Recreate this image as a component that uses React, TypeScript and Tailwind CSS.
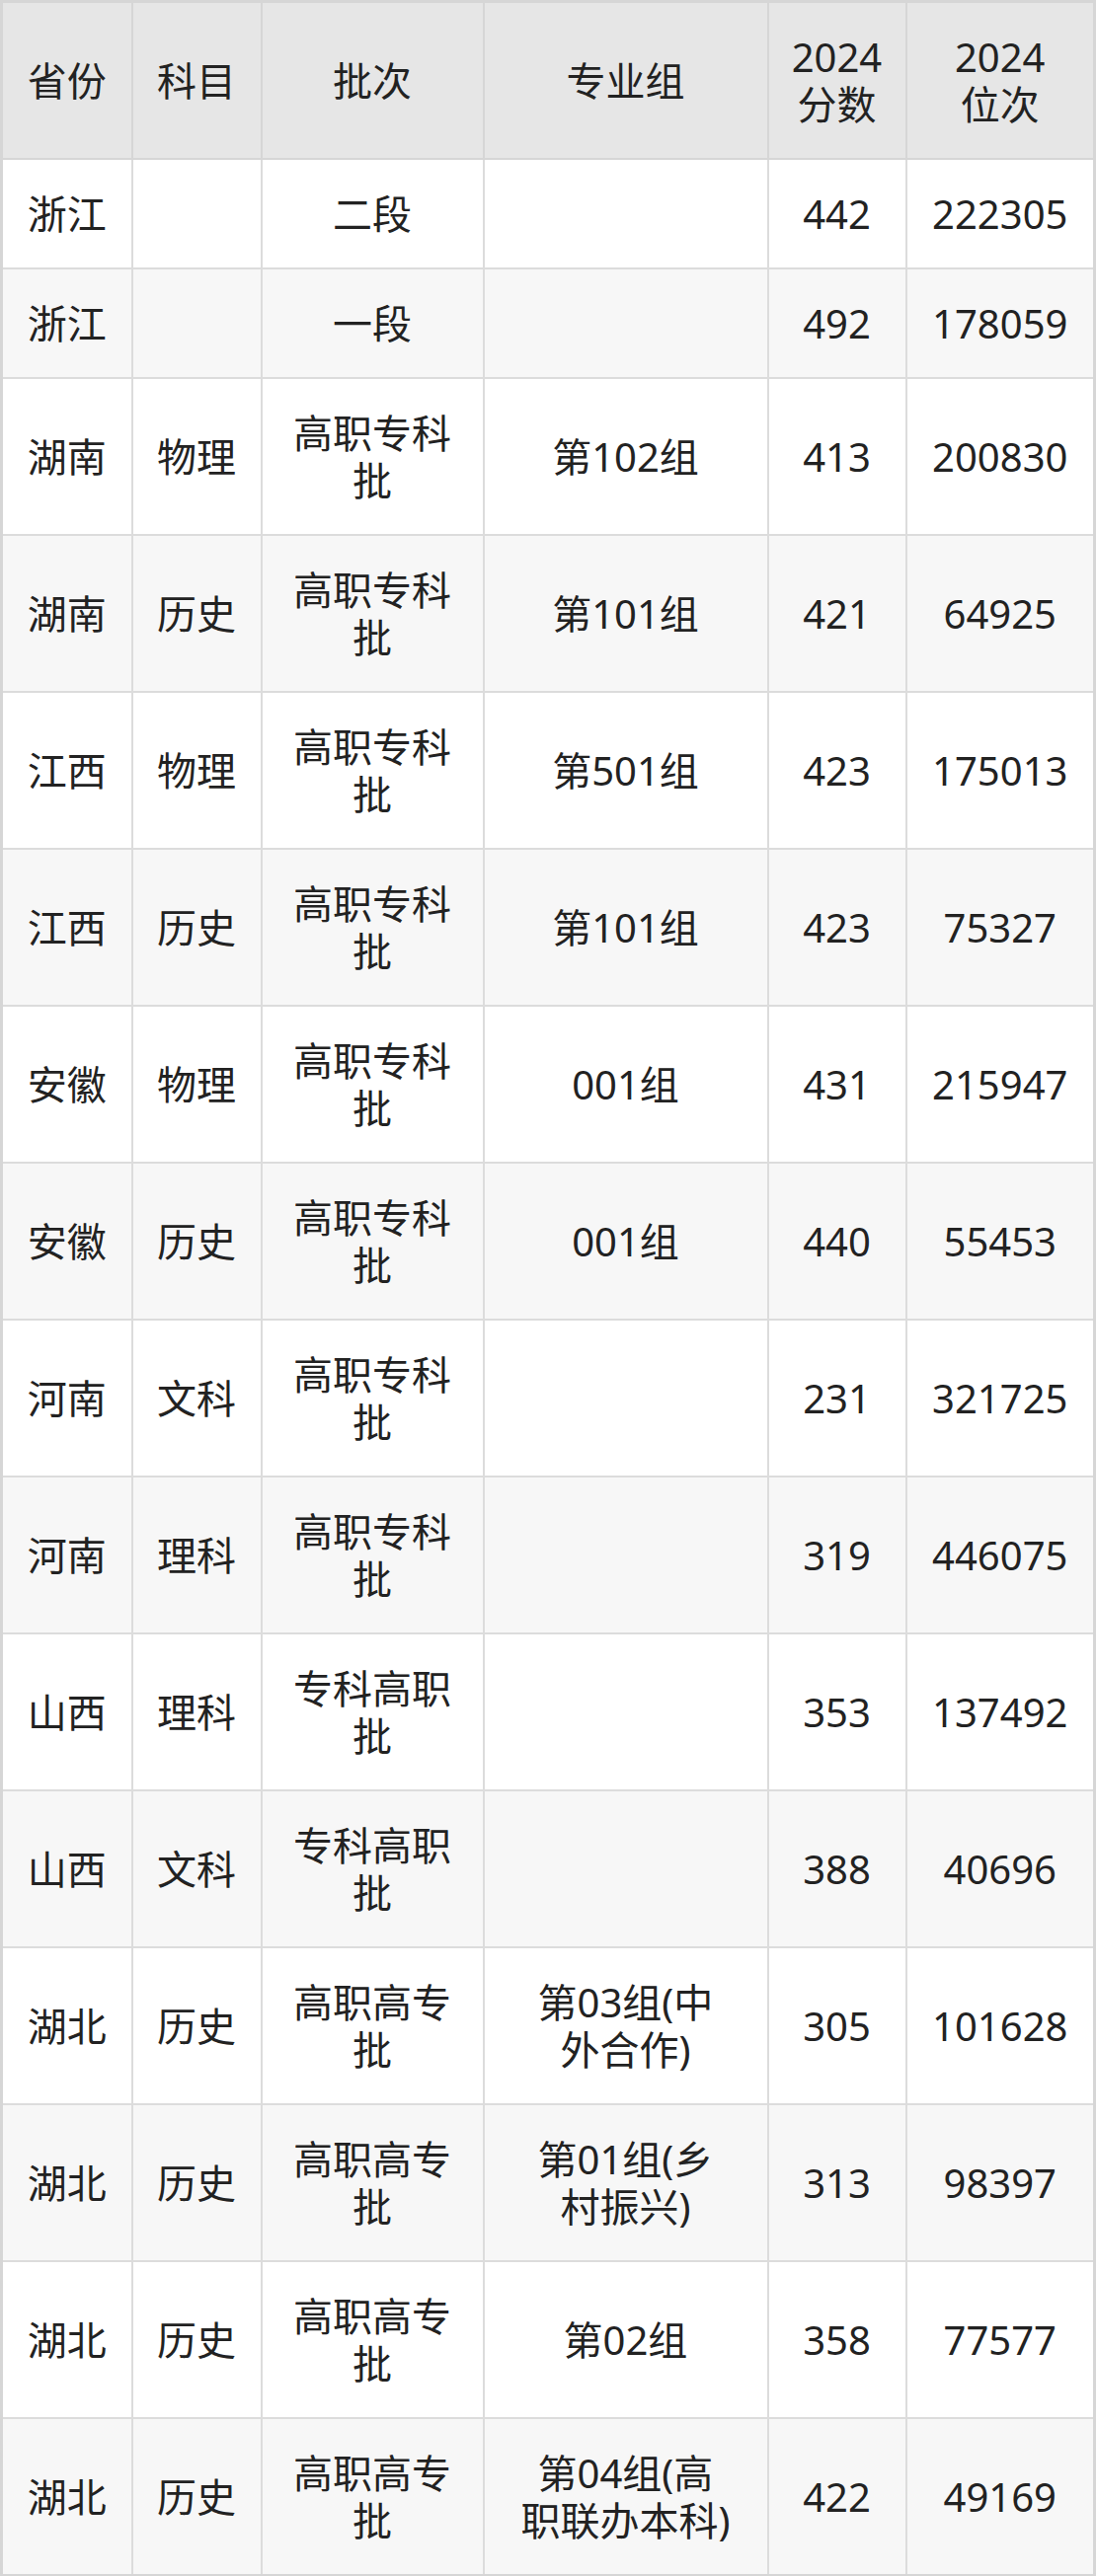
const rows: string[][] = [
  ['浙江', '', '二段', '', '442', '222305'],
  ['浙江', '', '一段', '', '492', '178059'],
  ['湖南', '物理', '高职专科批', '第102组', '413', '200830'],
  ['湖南', '历史', '高职专科批', '第101组', '421', '64925'],
  ['江西', '物理', '高职专科批', '第501组', '423', '175013'],
  ['江西', '历史', '高职专科批', '第101组', '423', '75327'],
  ['安徽', '物理', '高职专科批', '001组', '431', '215947'],
  ['安徽', '历史', '高职专科批', '001组', '440', '55453'],
  ['河南', '文科', '高职专科批', '', '231', '321725'],
  ['河南', '理科', '高职专科批', '', '319', '446075'],
  ['山西', '理科', '专科高职批', '', '353', '137492'],
  ['山西', '文科', '专科高职批', '', '388', '40696'],
  ['湖北', '历史', '高职高专批', '第03组(中外合作)', '305', '101628'],
  ['湖北', '历史', '高职高专批', '第01组(乡村振兴)', '313', '98397'],
  ['湖北', '历史', '高职高专批', '第02组', '358', '77577'],
  ['湖北', '历史', '高职高专批', '第04组(高职联办本科)', '422', '49169'],
];

const headers = ['省份', '科目', '批次', '专业组', '2024分数', '2024位次'];

// per-column horizontal padding so the wraps land where the picture has them
const padX = ['px-[8px]', 'px-[8px]', 'px-[16px]', 'px-[36px]', 'px-[20px]', 'px-[8px]'];

export default function App() {
  return (
    <div
      className="w-[1110px] bg-white text-[#222222]"
      style={{ fontFamily: '"Noto Sans", "Noto Sans CJK SC", sans-serif' }}
    >
      <table className="w-[1110px] table-fixed border-collapse border-[3px] border-[#d6d6d6] text-[40px] leading-[48px]">
        <colgroup>
          <col className="w-[132px]" />
          <col className="w-[131px]" />
          <col className="w-[225px]" />
          <col className="w-[288px]" />
          <col className="w-[140px]" />
          <col />
        </colgroup>
        <thead>
          <tr className="bg-[#e6e6e6]">
            {headers.map((h, i) => (
              <th
                key={i}
                className={`border-2 border-[#d6d6d6] pt-[31px] pb-[30px] text-center align-middle font-normal ${padX[i]}`}
              >
                {h.startsWith('2024') ? (
                  <>
                    <div>2024</div>
                    <div>{h.slice(4)}</div>
                  </>
                ) : (
                  h
                )}
              </th>
            ))}
          </tr>
        </thead>
        <tbody>
          {rows.map((row, r) => (
            <tr key={r} className={r % 2 === 0 ? 'bg-white' : 'bg-[#f7f7f7]'}>
              {row.map((cell, c) => (
                <td
                  key={c}
                  className={`border-2 border-[#dcdcdc] pt-[31px] pb-[30px] text-center align-middle ${padX[c]}`}
                >
                  {cell}
                </td>
              ))}
            </tr>
          ))}
        </tbody>
      </table>
    </div>
  );
}
